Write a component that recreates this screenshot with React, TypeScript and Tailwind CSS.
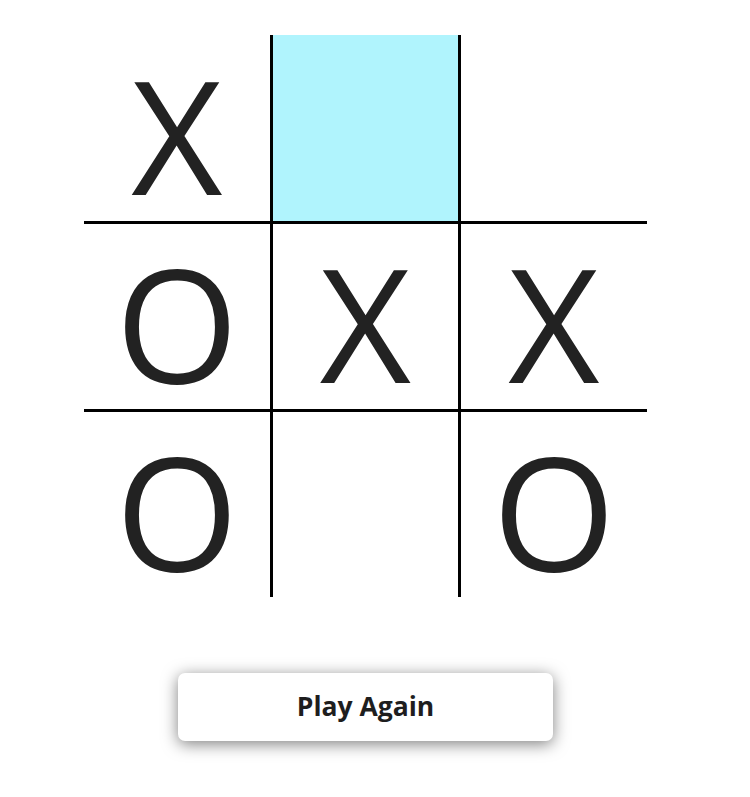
import React, { useState } from 'react';

type Mark = 'X' | 'O' | null;

const startBoard: Mark[] = ['X', null, null, 'O', 'X', 'X', 'O', null, 'O'];

// column widths / row heights include the 3px divider on the inner edges
const colClass = ['w-[189px]', 'w-[188px]', 'w-[186px]'];
const rowClass = ['h-[189px]', 'h-[188px]', 'h-[185px]'];

export default function App() {
  const [board, setBoard] = useState<Mark[]>(startBoard);
  const [hovered, setHovered] = useState<number | null>(1);

  const handlePlayAgain = () => {
    setBoard(Array(9).fill(null));
  };

  return (
    <div
      className="min-h-screen bg-white w-[731px] flex flex-col items-center pt-[35px]"
      style={{ fontFamily: '"Open Sans", "Noto Sans", Arial, sans-serif' }}
    >
      <div className="flex flex-col">
        {[0, 1, 2].map((row) => (
          <div key={row} className="flex">
            {[0, 1, 2].map((col) => {
              const i = row * 3 + col;
              return (
                <div
                  key={col}
                  onMouseEnter={() => setHovered(i)}
                  className={[
                    colClass[col],
                    rowClass[row],
                    col < 2 ? 'border-r-[3px]' : '',
                    row < 2 ? 'border-b-[3px]' : '',
                    'border-black flex items-center justify-center pt-[11px] text-[158px] leading-none text-[#222] cursor-pointer select-none',
                    hovered === i && !board[i] ? 'bg-[#b0f4fd]' : 'bg-white',
                  ].join(' ')}
                >
                  {board[i]}
                </div>
              );
            })}
          </div>
        ))}
      </div>

      <button
        onClick={handlePlayAgain}
        className="mt-[76px] w-[375px] h-[68px] bg-white rounded-[7px] shadow-[0_3px_16px_rgba(0,0,0,0.5)] text-[26.5px] font-bold text-[#1e1e1e]"
      >
        Play Again
      </button>
    </div>
  );
}
